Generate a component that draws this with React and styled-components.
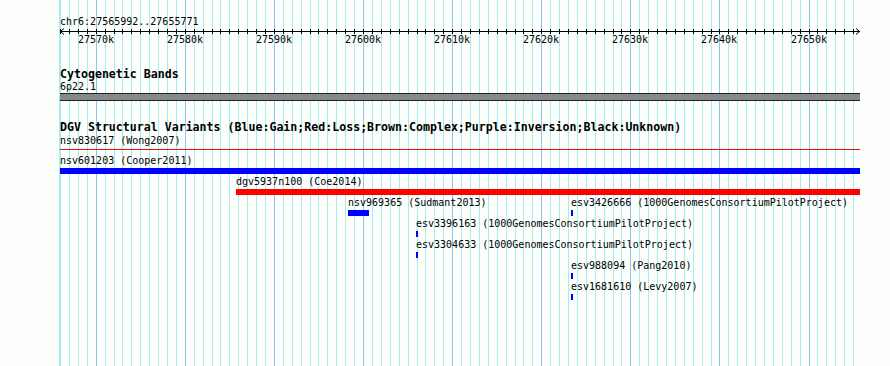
import styled, { createGlobalStyle } from "styled-components";

const VIEW_START = 27565992;
const VIEW_END = 27655771;
const TRACK_W = 800;
const LEFT = 60;
const PAGE_W = 890;
const PAGE_H = 366;

const scale = TRACK_W / (VIEW_END - VIEW_START);
const toX = (bp) => Math.round((bp - VIEW_START) * scale);

const kbTicks = [];
for (let k = Math.ceil(VIEW_START / 1000); k * 1000 <= VIEW_END; k++) kbTicks.push(k);

const BLUE = "#0000ff";
const RED = "#ff0000";

// stacked rows of the DGV track, as the browser packed them
const dgvRows = [
  { h: 20, items: [{ id: "nsv830617", src: "Wong2007", start: 27200000, end: 27900000, color: "#e01010", thin: true }] },
  { items: [{ id: "nsv601203", src: "Cooper2011", start: 27300000, end: 27800000, color: BLUE }] },
  { items: [{ id: "dgv5937n100", src: "Coe2014", start: 27585743, end: 27760000, color: RED }] },
  {
    items: [
      { id: "nsv969365", src: "Sudmant2013", start: 27598311, end: 27600640, color: BLUE },
      { id: "esv3426666", src: "1000GenomesConsortiumPilotProject", start: 27623337, end: 27623561, color: BLUE },
    ],
  },
  { items: [{ id: "esv3396163", src: "1000GenomesConsortiumPilotProject", start: 27605942, end: 27606166, color: BLUE }] },
  { items: [{ id: "esv3304633", src: "1000GenomesConsortiumPilotProject", start: 27605942, end: 27606166, color: BLUE }] },
  { items: [{ id: "esv988094", src: "Pang2010", start: 27623337, end: 27623561, color: BLUE }] },
  { items: [{ id: "esv1681610", src: "Levy2007", start: 27623337, end: 27623561, color: BLUE }] },
];

const GlobalStyle = createGlobalStyle`
  html, body {
    margin: 0;
    padding: 0;
    background: #fcfefc;
  }
`;

const Browser = styled.div`
  position: relative;
  width: ${PAGE_W}px;
  height: ${PAGE_H}px;
  overflow: hidden;
  background: #fcfefc;
  font-family: "DejaVu Sans Mono", "Liberation Mono", monospace;
  font-size: 10px;
  color: #000;
`;

const GridLayer = styled.svg`
  position: absolute;
  top: 0;
  left: 0;
  pointer-events: none;
`;

const Tracks = styled.div`
  position: relative;
  padding-left: ${LEFT}px;
  width: ${TRACK_W}px;
`;

const PosLabel = styled.div`
  margin-top: 16px;
  height: 12px;
  line-height: 12px;
  white-space: nowrap;
`;

const AxisSvg = styled.svg`
  display: block;
  overflow: visible;
`;

const TickLabels = styled.div`
  position: relative;
  height: 12px;
`;

const TickLabel = styled.span`
  position: absolute;
  top: 0;
  line-height: 12px;
  transform: translateX(-50%);
  white-space: nowrap;
`;

const TrackTitle = styled.div`
  margin-top: ${(p) => p.$gap}px;
  height: 13px;
  line-height: 13px;
  font-weight: bold;
  font-size: 11.6px;
  white-space: nowrap;
`;

const BandName = styled.div`
  height: 12px;
  line-height: 12px;
`;

const Band = styled.div`
  box-sizing: border-box;
  height: 8px;
  width: ${TRACK_W}px;
  background: #888888;
  border-top: 1px solid #222;
  border-bottom: 1px solid #222;
`;

const Rows = styled.div`
  margin-top: 1px;
`;

const Row = styled.div`
  position: relative;
  height: ${(p) => p.$h || 21}px;
`;

const Feature = styled.div`
  position: absolute;
  top: 0;
`;

const Label = styled.div`
  height: 12px;
  line-height: 12px;
  white-space: nowrap;
`;

const Bar = styled.div`
  margin-top: ${(p) => (p.$thin ? 2 : 1)}px;
  height: ${(p) => (p.$thin ? 1 : 6)}px;
  background: ${(p) => p.$color};
`;

function Grid() {
  return (
    <GridLayer width={PAGE_W} height={PAGE_H} shapeRendering="crispEdges">
      <line x1={LEFT - 0.5} x2={LEFT - 0.5} y1={0} y2={PAGE_H} stroke="#a8ecee" />
      {kbTicks.map((k) => {
        const x = LEFT + toX(k * 1000) + 0.5;
        return (
          <line
            key={k}
            x1={x}
            x2={x}
            y1={0}
            y2={PAGE_H}
            stroke={k % 10 === 0 ? "#86c8ee" : "#a8ecee"}
          />
        );
      })}
    </GridLayer>
  );
}

function Ruler() {
  return (
    <>
      <PosLabel>chr6:{VIEW_START}..{VIEW_END}</PosLabel>
      <AxisSvg width={TRACK_W} height={6} shapeRendering="crispEdges">
        <line x1={0} x2={TRACK_W} y1={3.5} y2={3.5} stroke="#000" />
        {kbTicks.map((k) => {
          const x = toX(k * 1000) + 0.5;
          return <line key={k} x1={x} x2={x} y1={1} y2={6} stroke="#000" />;
        })}
        <polyline points="4,0.5 0.5,3.5 4,6.5" fill="none" stroke="#000" shapeRendering="auto" />
        <polyline points={`${TRACK_W - 4},0.5 ${TRACK_W - 0.5},3.5 ${TRACK_W - 4},6.5`} fill="none" stroke="#000" shapeRendering="auto" />
      </AxisSvg>
      <TickLabels>
        {kbTicks
          .filter((k) => k % 10 === 0)
          .map((k) => (
            <TickLabel key={k} style={{ left: toX(k * 1000) }}>
              {k}k
            </TickLabel>
          ))}
      </TickLabels>
    </>
  );
}

function VariantRow({ row }) {
  return (
    <Row $h={row.h}>
      {row.items.map((f) => {
        const left = Math.max(0, toX(f.start));
        const right = Math.min(TRACK_W, toX(f.end));
        return (
          <Feature key={f.id} style={{ left }}>
            <Label>
              {f.id} ({f.src})
            </Label>
            <Bar $color={f.color} $thin={f.thin} style={{ width: Math.max(2, right - left) }} />
          </Feature>
        );
      })}
    </Row>
  );
}

export default function App() {
  return (
    <>
      <GlobalStyle />
      <Browser>
        <Grid />
        <Tracks>
          <Ruler />
          <TrackTitle $gap={22}>Cytogenetic Bands</TrackTitle>
          <BandName>6p22.1</BandName>
          <Band />
          <TrackTitle $gap={20}>
            DGV Structural Variants (Blue:Gain;Red:Loss;Brown:Complex;Purple:Inversion;Black:Unknown)
          </TrackTitle>
          <Rows>
            {dgvRows.map((row, i) => (
              <VariantRow key={i} row={row} />
            ))}
          </Rows>
        </Tracks>
      </Browser>
    </>
  );
}
